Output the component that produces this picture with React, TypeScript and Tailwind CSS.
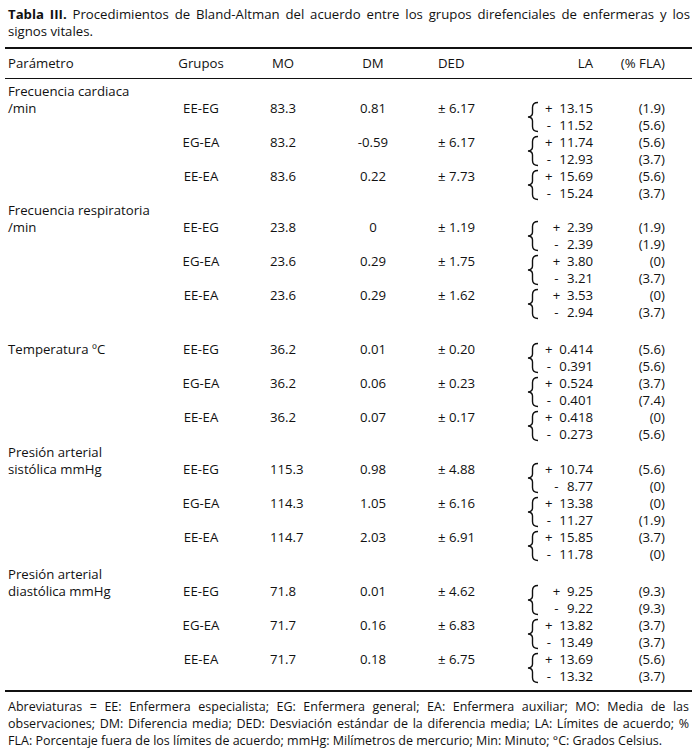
type Lim = [string, string, string];
type Row = [string, string, string, string, Lim, Lim];
type Group = { title?: string; sub: string; gap?: string; rows: Row[] };

const groups: Group[] = [
  {
    title: "Frecuencia cardiaca",
    sub: "/min",
    rows: [
      ["EE-EG", "83.3", "0.81", "± 6.17", ["+", "13.15", "(1.9)"], ["-", "11.52", "(5.6)"]],
      ["EG-EA", "83.2", "-0.59", "± 6.17", ["+", "11.74", "(5.6)"], ["-", "12.93", "(3.7)"]],
      ["EE-EA", "83.6", "0.22", "± 7.73", ["+", "15.69", "(5.6)"], ["-", "15.24", "(3.7)"]],
    ],
  },
  {
    title: "Frecuencia respiratoria",
    sub: "/min",
    rows: [
      ["EE-EG", "23.8", "0", "± 1.19", ["+", "2.39", "(1.9)"], ["-", "2.39", "(1.9)"]],
      ["EG-EA", "23.6", "0.29", "± 1.75", ["+", "3.80", "(0)"], ["-", "3.21", "(3.7)"]],
      ["EE-EA", "23.6", "0.29", "± 1.62", ["+", "3.53", "(0)"], ["-", "2.94", "(3.7)"]],
    ],
  },
  {
    sub: "Temperatura ºC",
    gap: "pt-[20px]",
    rows: [
      ["EE-EG", "36.2", "0.01", "± 0.20", ["+", "0.414", "(5.6)"], ["-", "0.391", "(5.6)"]],
      ["EG-EA", "36.2", "0.06", "± 0.23", ["+", "0.524", "(3.7)"], ["-", "0.401", "(7.4)"]],
      ["EE-EA", "36.2", "0.07", "± 0.17", ["+", "0.418", "(0)"], ["-", "0.273", "(5.6)"]],
    ],
  },
  {
    title: "Presión arterial",
    sub: "sistólica mmHg",
    gap: "pt-[1px]",
    rows: [
      ["EE-EG", "115.3", "0.98", "± 4.88", ["+", "10.74", "(5.6)"], ["-", "8.77", "(0)"]],
      ["EG-EA", "114.3", "1.05", "± 6.16", ["+", "13.38", "(0)"], ["-", "11.27", "(1.9)"]],
      ["EE-EA", "114.7", "2.03", "± 6.91", ["+", "15.85", "(3.7)"], ["-", "11.78", "(0)"]],
    ],
  },
  {
    title: "Presión arterial",
    sub: "diastólica mmHg",
    gap: "pt-[3px]",
    rows: [
      ["EE-EG", "71.8", "0.01", "± 4.62", ["+", "9.25", "(9.3)"], ["-", "9.22", "(9.3)"]],
      ["EG-EA", "71.7", "0.16", "± 6.83", ["+", "13.82", "(3.7)"], ["-", "13.49", "(3.7)"]],
      ["EE-EA", "71.7", "0.18", "± 6.75", ["+", "13.69", "(5.6)"], ["-", "13.32", "(3.7)"]],
    ],
  },
];

const cols = "grid grid-cols-[155px_82px_86px_90px_84px_91px_72px]";

const Brace = () => (
  <svg width="12" height="32" viewBox="0 0 12 32" className="mt-[1px] shrink-0">
    <path
      d="M11 1.5 C7 1.5 5.5 3 5.5 6.5 L5.5 12 C5.5 14.5 4 15.8 1 16 C4 16.2 5.5 17.5 5.5 20 L5.5 25.5 C5.5 29 7 30.5 11 30.5"
      fill="none"
      stroke="#111"
      strokeWidth="1.4"
    />
  </svg>
);

const LimLine = ({ l }: { l: Lim }) => (
  <div className="text-right">
    <span className="inline-block w-[9px] text-center">{l[0]}</span>
    <span className="ml-[6px]">{l[1]}</span>
  </div>
);

const DataRow = ({ row, label }: { row: Row; label?: string }) => (
  <div className={`${cols} h-[34px]`}>
    <div className="pl-[3px]">{label}</div>
    <div className="text-center">{row[0]}</div>
    <div className="pl-[28px]">{row[1]}</div>
    <div className="text-center">{row[2]}</div>
    <div className="pl-[20px]">{row[3]}</div>
    <div className="flex pl-[25px]">
      <Brace />
      <div className="flex-1">
        <LimLine l={row[4]} />
        <LimLine l={row[5]} />
      </div>
    </div>
    <div className="text-right">
      <div>{row[4][2]}</div>
      <div>{row[5][2]}</div>
    </div>
  </div>
);

export default function App() {
  return (
    <div className="w-[697px] min-h-[748px] bg-white text-[#111] font-['Open_Sans',sans-serif] text-[13.2px] leading-[17px]">
      <div className="pl-[8px] pr-[7px] pt-[6px]">
        <p className="text-justify [text-align-last:justify]">
          <b className="font-bold">Tabla III.</b> Procedimientos de Bland-Altman del acuerdo entre los grupos
          direfenciales de enfermeras y los
        </p>
        <p>signos vitales.</p>
      </div>

      <div className="mx-[5px] mt-[7px] border-t-2 border-[#111]">
        <div className={`${cols} pt-[6px] pb-[6px] border-b border-[#111]`}>
          <div className="pl-[3px]">Parámetro</div>
          <div className="text-center">Grupos</div>
          <div className="pl-[30px]">MO</div>
          <div className="text-center">DM</div>
          <div className="pl-[20px]">DED</div>
          <div className="text-right">LA</div>
          <div className="text-right">(% FLA)</div>
        </div>

        <div className="pt-[4px] pb-[5px] border-b-2 border-[#111]">
          {groups.map((g, gi) => (
            <div key={gi} className={g.gap ?? ""}>
              {g.title && <div className="pl-[3px] h-[17px]">{g.title}</div>}
              {g.rows.map((r, ri) => (
                <DataRow key={ri} row={r} label={ri === 0 ? g.sub : undefined} />
              ))}
            </div>
          ))}
        </div>
      </div>

      <div className="pl-[8px] pr-[8px] pt-[6px] text-[12.5px] leading-[17px]">
        <p className="text-justify [text-align-last:justify]">
          Abreviaturas = EE: Enfermera especialista; EG: Enfermera general; EA: Enfermera auxiliar; MO: Media de las
        </p>
        <p className="text-justify [text-align-last:justify]">
          observaciones; DM: Diferencia media; DED: Desviación estándar de la diferencia media; LA: Límites de acuerdo; %
        </p>
        <p>
          FLA: Porcentaje fuera de los límites de acuerdo; mmHg: Milímetros de mercurio; Min: Minuto; °C: Grados Celsius.
        </p>
      </div>
    </div>
  );
}
